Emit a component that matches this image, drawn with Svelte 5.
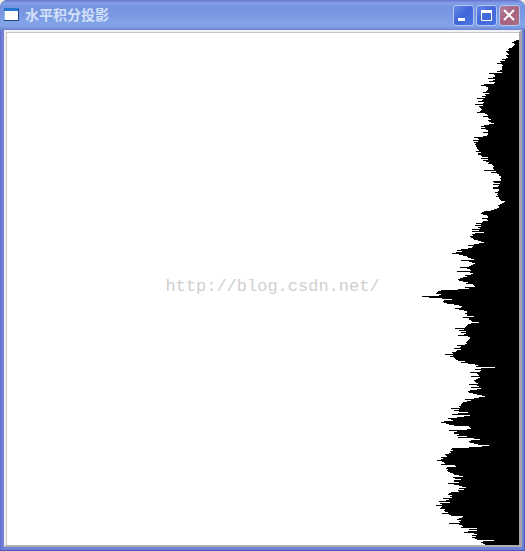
<script lang="ts">
    const title: string = "水平积分投影";
    const watermark: string = "http://blog.csdn.net/";

    // number of dark pixels in every image row, top to bottom
    const rowCounts: number[] = [
        3,5,7,5,4,5,6,7,10,11,10,13,12,11,10,13,12,11,13,17,
        14,19,18,22,17,16,17,17,17,17,19,22,17,30,25,24,24,26,31,24,
        26,30,24,25,35,38,33,31,31,31,32,33,36,30,34,33,37,34,42,36,
        37,41,35,36,44,36,40,39,38,37,38,39,42,34,32,31,36,31,30,28,
        31,30,28,25,30,35,38,34,38,33,31,31,36,31,31,32,36,45,41,40,
        46,41,45,43,44,43,43,42,42,41,40,43,38,41,41,38,37,31,38,31,
        36,33,30,31,27,26,25,26,26,25,35,23,28,22,20,20,18,18,19,18,
        18,26,25,19,26,20,21,26,26,20,20,21,24,21,22,21,23,20,20,19,
        18,14,15,17,19,21,20,20,22,25,28,35,37,38,36,32,31,31,37,32,
        31,36,37,43,38,44,38,41,39,47,40,47,35,44,47,46,49,48,46,45,
        41,38,35,40,45,51,46,47,51,58,62,57,63,67,60,56,52,51,48,45,
        58,50,47,44,46,48,50,59,52,49,48,62,49,46,48,54,52,56,59,61,
        60,56,51,53,46,45,44,54,50,61,78,81,82,83,78,80,97,90,77,67,
        75,76,75,72,65,60,57,58,64,60,55,52,52,54,52,52,45,56,50,50,
        48,47,40,48,51,52,53,54,64,55,60,53,58,53,55,61,51,49,49,50,
        51,52,53,52,54,62,58,59,65,58,62,63,67,66,74,66,69,65,64,63,
        61,54,58,51,44,41,43,24,38,44,38,39,49,42,41,40,48,39,41,43,
        45,44,43,41,50,42,40,48,38,42,49,51,50,46,42,37,34,40,45,54,
        48,52,56,57,58,58,60,59,68,60,65,60,51,61,67,49,55,62,71,68,
        66,75,78,73,70,65,50,49,48,52,70,62,65,65,60,62,52,61,45,39,
        48,50,49,45,41,30,37,50,67,68,66,69,68,70,74,73,72,78,76,78,
        82,77,75,74,78,64,63,72,73,71,72,71,69,66,65,60,56,66,64,58,
        65,65,60,71,65,60,57,53,60,55,61,60,68,70,71,67,69,67,76,70,
        73,80,69,79,77,83,77,78,79,74,75,74,71,77,70,68,56,57,60,62,
        58,60,59,70,60,57,56,58,42,50,42,51,55,45,42,47,43,47,44,42,
        25,36,38,36,34
    ];

    const CHART_WIDTH: number = 100;

    function rowsIntoPath(rows: number[]): string {
        let path = `M${CHART_WIDTH} 0`;
        for (const count of rows) {
            path += `H${CHART_WIDTH - count}v1`;
        }
        return path + `H${CHART_WIDTH}z`;
    }
</script>

<div class="window">
    <header class="titlebar">
        <svg class="app-icon" width="16" height="14" viewBox="0 0 16 14" aria-hidden="true">
            <rect x="0" y="0" width="15" height="13" fill="#8db4e4" />
            <rect x="0" y="0" width="15" height="3" fill="#2677d2" />
            <rect x="1" y="3" width="13" height="9" fill="#fff" />
            <path d="M0 12.5H15M14.5 1V13" fill="none" stroke="#1c4484" />
        </svg>
        <h1>{title}</h1>
        <div class="controls">
            <button type="button" aria-label="Minimize">
                <svg width="19" height="19" viewBox="0 0 19 19"><rect x="4" y="12" width="7" height="3" fill="#fff" /></svg>
            </button>
            <button type="button" aria-label="Maximize">
                <svg width="19" height="19" viewBox="0 0 19 19">
                    <path d="M4.5 5V14.5H14.5V5" fill="none" stroke="#fff" />
                    <rect x="4" y="4" width="11" height="3" fill="#fff" />
                </svg>
            </button>
            <button type="button" class="close" aria-label="Close">
                <svg width="19" height="19" viewBox="0 0 19 19"><path d="M4 4L14 14M14 4L4 14" stroke="#fff" stroke-width="2" /></svg>
            </button>
        </div>
    </header>
    <main class="client">
        <svg class="chart" width={CHART_WIDTH} height={rowCounts.length} shape-rendering="crispEdges" aria-label={title}>
            <path d={rowsIntoPath(rowCounts)} />
        </svg>
        <span class="watermark">{watermark}</span>
    </main>
</div>

<style>
    :global(body) {
        margin: 0;
        background: #f0eee4;
    }

    .window {
        padding: 0 3px 4px 4px;
        background: #6f80d6;
        border-radius: 8px 8px 0 0;
        box-shadow: inset -1px -1px 0 #4a58b8, inset 1px 0 0 #6370cc;
        overflow: hidden;
    }

    .titlebar {
        display: flex;
        align-items: center;
        height: 30px;
        margin: 0 -3px 0 -4px;
        padding: 0 5px 0 4px;
        box-sizing: border-box;
        background: linear-gradient(#6573cf 0, #829fe7 3px, #7693e0 7px, #7a97e2 14px, #82a5e8 25px, #7b98e0 28px, #6b80cf 30px);
    }

    h1 {
        flex: 1;
        margin: 0 0 0 5px;
        padding-bottom: 2px;
        color: #d0e0f8;
        font: 700 14px/20px "Noto Sans CJK SC", sans-serif;
    }

    .controls {
        display: flex;
        gap: 2px;
    }

    button {
        display: flex;
        width: 21px;
        height: 21px;
        padding: 0;
        border: 1px solid #b4c6f3;
        border-radius: 3px;
        background: linear-gradient(135deg, #6787e6, #4066da 50%, #4c75e4);
    }

    button.close {
        background: linear-gradient(135deg, #b080a4, #a8627c 50%, #ab6e88);
    }

    .client {
        position: relative;
        display: flex;
        justify-content: flex-end;
        padding-top: 8px;
        border: 2px solid #f2f2f6;
        border-right: 3px solid #a7a4ac;
        border-bottom-color: #b0aeb2;
        background: #fff;
        box-shadow: inset 1px 1px 0 #c8c6c0;
    }

    .chart {
        display: block;
    }

    .watermark {
        position: absolute;
        inset: 0;
        display: flex;
        align-items: center;
        justify-content: center;
        padding: 0 0 4px 20px;
        color: #d0d0d0;
        font: 17px/20px "Liberation Mono", monospace;
    }
</style>
